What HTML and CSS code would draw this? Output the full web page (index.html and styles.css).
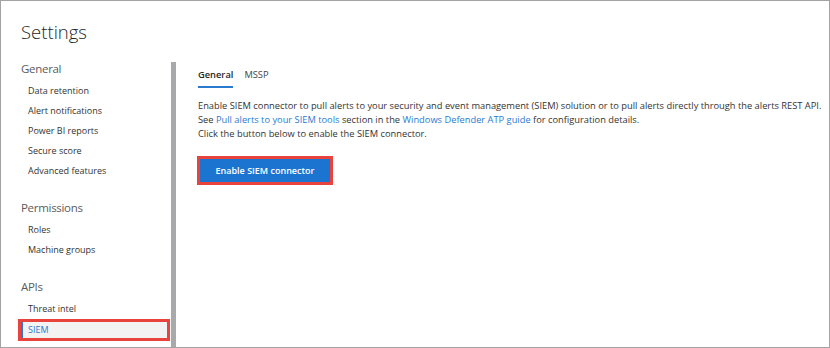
FILE: index.html
```html
<!DOCTYPE html>
<html>
  <head>
    <meta charset="UTF-8" />
    <title>Settings</title>
    <link rel="stylesheet" href="styles.css">
  </head>
  <body>
    <div class="frame">
      <h1 class="title">Settings</h1>
      <div class="main">
        <nav class="sidebar">
          <div class="group">
            <div class="group-title">General</div>
            <a class="nav-item">Data retention</a>
            <a class="nav-item">Alert notifications</a>
            <a class="nav-item">Power BI reports</a>
            <a class="nav-item">Secure score</a>
            <a class="nav-item">Advanced features</a>
          </div>
          <div class="group">
            <div class="group-title">Permissions</div>
            <a class="nav-item">Roles</a>
            <a class="nav-item">Machine groups</a>
          </div>
          <div class="group">
            <div class="group-title">APIs</div>
            <a class="nav-item">Threat intel</a>
            <a class="nav-item selected">SIEM</a>
          </div>
        </nav>
        <div class="divider"></div>
        <section class="content">
          <div class="tabs">
            <span class="tab active">General</span>
            <span class="tab">MSSP</span>
          </div>
          <p class="desc">
            Enable SIEM connector to pull alerts to your security and event management (SIEM) solution or to pull alerts directly through the alerts REST API.<br />
            See <a class="link">Pull alerts to your SIEM tools</a> section in the <a class="link">Windows Defender ATP guide</a> for configuration details.<br />
            Click the button below to enable the SIEM connector.
          </p>
          <div class="highlight">
            <button class="primary">Enable SIEM connector</button>
          </div>
        </section>
      </div>
    </div>
  </body>
</html>
```

FILE: styles.css
```css
html {
  font-family: "Open Sans", "Noto Sans", sans-serif;
  color: #333;
}

body {
  margin: 0;
  background: #fff;
}

.frame {
  width: 830px;
  height: 348px;
  box-sizing: border-box;
  border: 1px solid #a3a3a3;
  display: flex;
  flex-direction: column;
  overflow: hidden;
}

.title {
  margin: 19px 0 0 20px;
  height: 24px;
  line-height: 24px;
  font-size: 18.5px;
  font-weight: 300;
  color: #262626;
}

.main {
  display: flex;
  flex: 1;
  margin-top: 17px;
}

.sidebar {
  width: 170px;
  box-sizing: border-box;
  padding-left: 20px;
}

.group {
  margin-bottom: 19px;
}

.group-title {
  height: 18px;
  line-height: 16px;
  font-size: 11.5px;
  letter-spacing: -0.3px;
  color: #5c5c5c;
  margin-bottom: 2px;
}

.nav-item {
  display: block;
  height: 20px;
  line-height: 20px;
  padding-left: 7px;
  font-size: 9px;
  color: #333;
  white-space: nowrap;
}

.nav-item.selected {
  margin-left: -3px;
  width: 139px;
  height: 16px;
  line-height: 16px;
  padding-left: 7px;
  border: 3px solid #e8433d;
  background: #f3f3f3;
  box-shadow: inset 2px 0 0 #2a7bd0;
  color: #2a7bd0;
}

.divider {
  width: 5px;
  margin-top: 1px;
  background: #a8a9ab;
}

.content {
  flex: 1;
  padding: 6px 0 0 22px;
}

.tabs {
  display: flex;
  gap: 11px;
}

.tab {
  line-height: 16px;
  font-size: 9.3px;
  padding-bottom: 3px;
  border-bottom: 2px solid transparent;
  color: #444;
}

.tab.active {
  font-weight: 600;
  color: #262626;
  border-bottom-color: #2a7bd0;
}

.desc {
  margin: 11px 0 0;
  font-size: 9.3px;
  line-height: 14px;
  color: #333;
  white-space: nowrap;
}

.link {
  color: #2a7bd0;
}

.highlight {
  display: inline-block;
  margin-top: 15px;
  margin-left: -1px;
  border: 3px solid #e8433d;
}

.primary {
  display: block;
  width: 130px;
  height: 23px;
  border: none;
  padding: 0;
  background: #1c74d1;
  color: #fff;
  font-family: inherit;
  font-size: 9px;
  font-weight: 600;
}
```
